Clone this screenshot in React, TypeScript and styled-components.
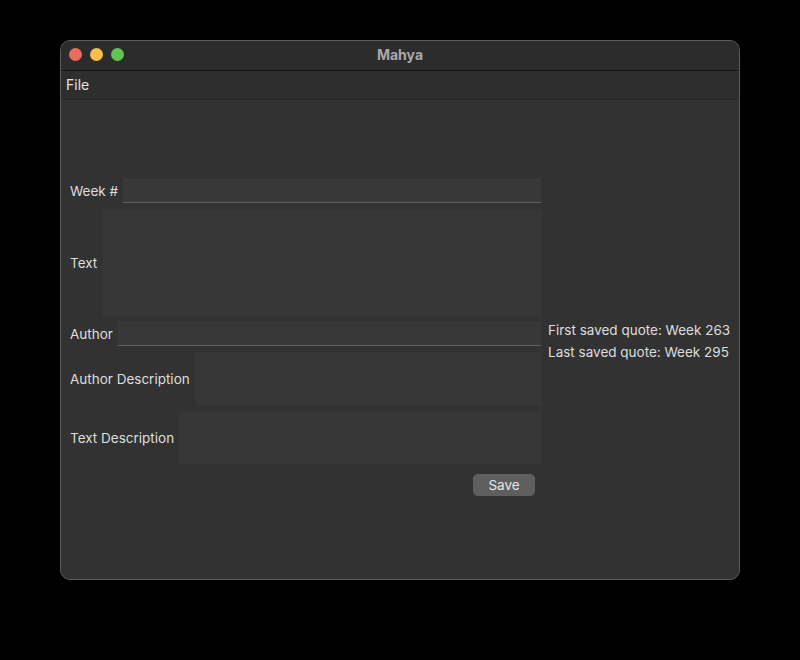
import React from 'react';
import styled, { createGlobalStyle } from 'styled-components';

const GlobalStyle = createGlobalStyle`
	html, body {
		margin: 0;
		padding: 0;
		background: #000;
		font-family: Inter, "Noto Sans", "Liberation Sans", sans-serif;
	}
`;

const Screen = styled('div')`
	width: 800px;
	height: 660px;
	padding: 40px 60px;
	box-sizing: border-box;
`;

const Window = styled('div')`
	width: 680px;
	height: 540px;
	box-sizing: border-box;
	border: 1px solid #5c5c5c;
	border-radius: 10px;
	overflow: hidden;
	display: flex;
	flex-direction: column;
	background: #323232;
`;

const TitleBar = styled('div')`
	position: relative;
	height: 30px;
	flex: none;
	background: #2c2c2c;
	border-bottom: 1px solid #161616;
	display: flex;
	align-items: center;
	justify-content: center;
	box-sizing: border-box;
`;

const Lights = styled('div')`
	position: absolute;
	left: 8px;
	top: 7px;
	display: flex;
	gap: 8px;
`;

const Light = styled('span')<{ $color: string }>`
	width: 13px;
	height: 13px;
	border-radius: 50%;
	background: ${({ $color }) => $color};
`;

const Title = styled('div')`
	font-size: 14px;
	font-weight: 700;
	color: #a9a9a9;
	margin-top: -2px;
`;

const MenuBar = styled('div')`
	height: 29px;
	flex: none;
	background: #2e2e2e;
	border-bottom: 1px solid #282828;
	display: flex;
	align-items: center;
	padding-left: 5px;
	box-sizing: border-box;
`;

const MenuItem = styled('span')`
	font-size: 14px;
	color: #e2e2e2;
	margin-top: -1px;
`;

const Content = styled('div')`
	flex: 1;
	display: flex;
	align-items: center;
	padding: 0 10px 0 9px;
`;

const Form = styled('div')`
	flex: none;
	width: 472px;
	display: flex;
	flex-direction: column;
	margin-top: -4px;
`;

const Row = styled('div')<{ $gap: number }>`
	display: flex;
	align-items: center;
	margin-bottom: ${({ $gap }) => $gap}px;
`;

const Label = styled('span')`
	font-size: 13.5px;
	color: #dedede;
	margin-right: 5px;
	white-space: nowrap;
`;

const Input = styled('div')`
	flex: 1;
	height: 22px;
	margin-right: 1px;
	background: #383838;
	border-top: 1px solid #3c3c3c;
	border-bottom: 1px solid #5f5f5f;
`;

const Area = styled('div')<{ $h: number }>`
	flex: 1;
	height: ${({ $h }) => $h}px;
	background: #373737;
	border: 1px solid #353535;
	box-sizing: border-box;
`;

const Actions = styled('div')`
	display: flex;
	justify-content: flex-end;
	padding-right: 7px;
`;

const Button = styled('button')`
	width: 62px;
	height: 22px;
	border: none;
	border-radius: 5px;
	background: #5f5f5f;
	color: #e8e8e8;
	font-family: inherit;
	font-size: 13.5px;
	padding: 0;
`;

const Info = styled('div')`
	margin-left: 6px;
	display: flex;
	flex-direction: column;
	gap: 6px;
	margin-top: 2px;
`;

const InfoLine = styled('span')`
	font-size: 13.5px;
	color: #dedede;
	white-space: nowrap;
`;

export default function App() {
	return (
		<>
			<GlobalStyle />
			<Screen>
				<Window>
					<TitleBar>
						<Lights>
							<Light $color="#ed6a5e" />
							<Light $color="#f5bf4f" />
							<Light $color="#61c554" />
						</Lights>
						<Title>Mahya</Title>
					</TitleBar>
					<MenuBar>
						<MenuItem>File</MenuItem>
					</MenuBar>
					<Content>
						<Form>
							<Row $gap={6}>
								<Label>Week #</Label>
								<Input />
							</Row>
							<Row $gap={5}>
								<Label>Text</Label>
								<Area $h={108} />
							</Row>
							<Row $gap={6}>
								<Label>Author</Label>
								<Input />
							</Row>
							<Row $gap={5}>
								<Label>Author Description</Label>
								<Area $h={54} />
							</Row>
							<Row $gap={10}>
								<Label>Text Description</Label>
								<Area $h={53} />
							</Row>
							<Actions>
								<Button>Save</Button>
							</Actions>
						</Form>
						<Info>
							<InfoLine>First saved quote: Week 263</InfoLine>
							<InfoLine>Last saved quote: Week 295</InfoLine>
						</Info>
					</Content>
				</Window>
			</Screen>
		</>
	);
}
